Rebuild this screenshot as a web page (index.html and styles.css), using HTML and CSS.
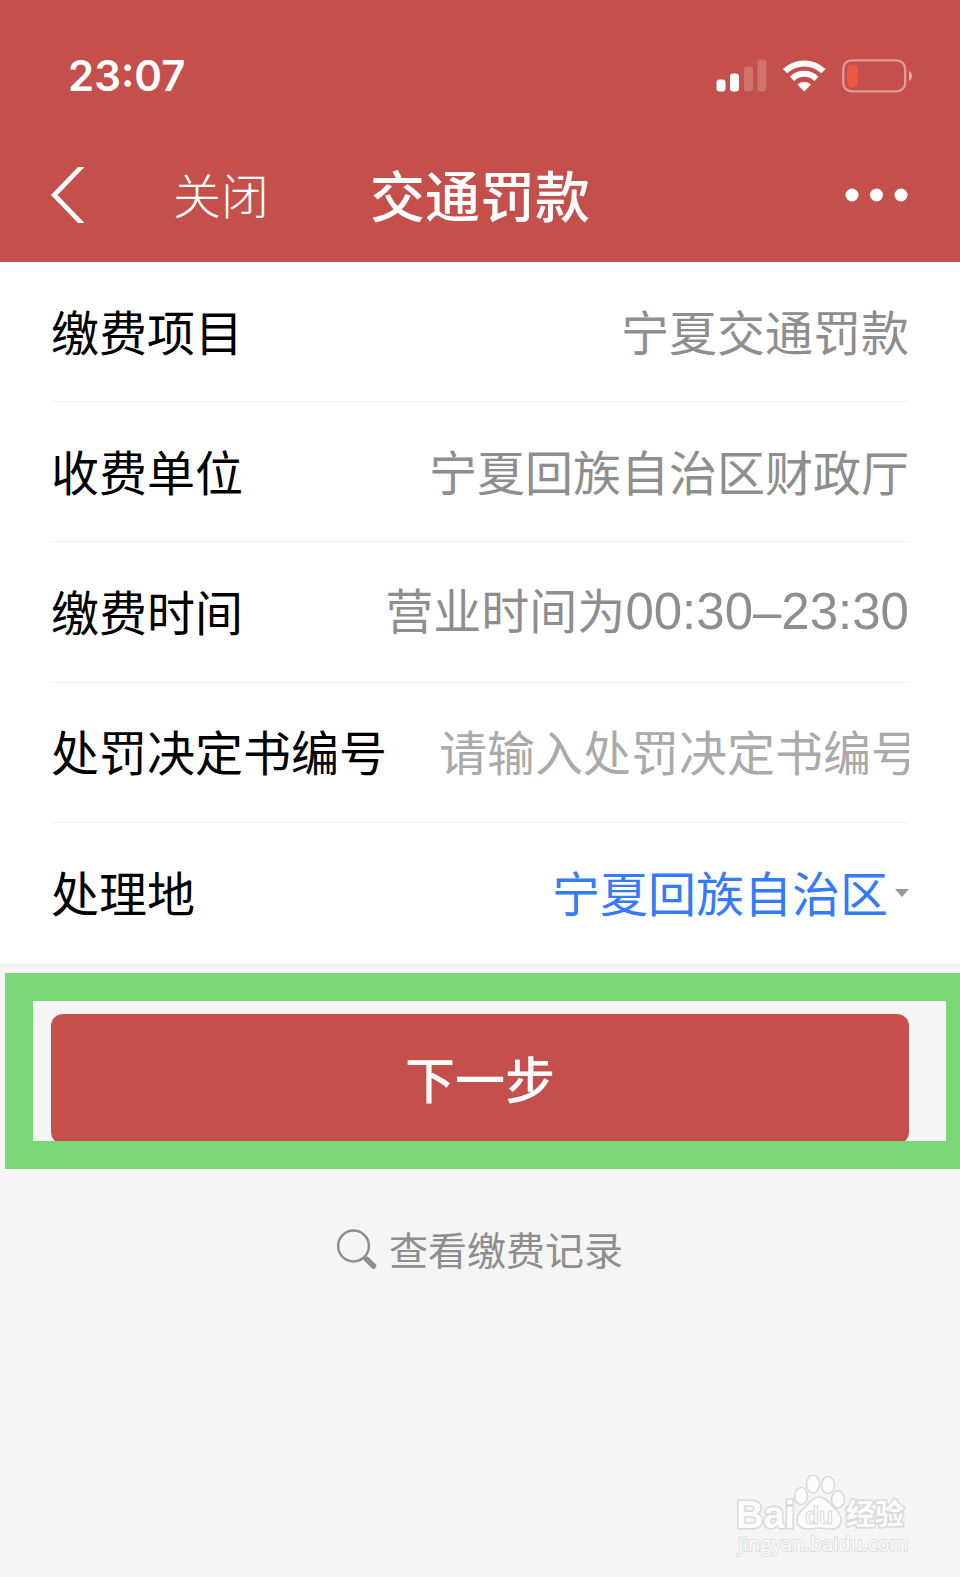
FILE: index.html
```html
<!DOCTYPE html>
<html lang="zh-CN">
<head>
<meta charset="utf-8">
<meta name="viewport" content="width=device-width, initial-scale=1">
<title>交通罚款</title>
<link rel="stylesheet" href="styles.css">
</head>
<body>
<div class="page">
  <header class="header">
    <div class="status">
      <span class="clock">23:07</span>
      <svg class="status-icons" viewBox="0 0 196 34" aria-hidden="true">
        <g fill="#fff">
          <rect x="0.5" y="20.500" width="9" height="12" rx="3"/>
          <rect x="14" y="14.500" width="9" height="18" rx="3"/>
          <rect x="28" y="7.500" width="9" height="25" rx="3" opacity=".2"/>
          <rect x="41.5" y="0.5" width="9" height="32" rx="3" opacity=".2"/>
        </g>
        <g fill="none" stroke="#fff" stroke-width="6">
          <path d="M69 12.200a27.500 27.500 0 0 1 38.400 0"/>
          <path d="M76 19.800a17.500 17.500 0 0 1 24.400 0"/>
        </g>
        <path d="M81.500 25.500a10.600 10.600 0 0 1 13.400 0L88.200 32.500z" fill="#fff"/>
        <rect x="127.2" y="1.4" width="62" height="31" rx="8.5" fill="none" stroke="#fff" stroke-opacity=".42" stroke-width="2.4"/>
        <rect x="131" y="5.400" width="11" height="23" rx="5" fill="#ef5545"/>
        <path d="M193 12c4 2 4 8 0 10z" fill="#fff" opacity=".55"/>
      </svg>
    </div>
    <nav class="nav">
      <div class="nav-left">
        <button class="icon-button" type="button" aria-label="返回">
          <svg class="chevron" viewBox="0 0 34 56" aria-hidden="true"><path d="M27 0h6.5L6.5 28l27 28H27L0 28z" fill="#fff"/></svg>
        </button>
        <button class="close" type="button">关闭</button>
      </div>
      <h1 class="title">交通罚款</h1>
      <button class="icon-button more" type="button" aria-label="更多">
        <svg class="dots" viewBox="0 0 64 14" aria-hidden="true"><g fill="#fff"><circle cx="7" cy="7" r="6.5"/><circle cx="31.500" cy="7" r="6.5"/><circle cx="56" cy="7" r="6.5"/></g></svg>
      </button>
    </nav>
  </header>

  <main>
    <form class="form">
      <div class="list">
        <div class="row"><span class="label">缴费项目</span><span class="value">宁夏交通罚款</span></div>
        <div class="row"><span class="label">收费单位</span><span class="value">宁夏回族自治区财政厅</span></div>
        <div class="row"><span class="label">缴费时间</span><span class="value">营业时间为<span class="hours">00:30–23:30</span></span></div>
        <div class="row"><label class="label" for="number">处罚决定书编号</label><input class="input" id="number" type="text" placeholder="请输入处罚决定书编号"></div>
        <div class="row">
          <label class="label" for="region">处理地</label>
          <span class="picker">
            <select class="select" id="region"><option>宁夏回族自治区</option></select>
            <svg class="caret" viewBox="0 0 14 12" aria-hidden="true"><path d="M0 4h14l-7 8z" fill="#999"/></svg>
          </span>
        </div>
      </div>
      <div class="action">
        <button class="submit" type="button">下一步</button>
        <div class="highlight"></div>
      </div>
    </form>
    <a class="records" href="#">
      <svg class="search" viewBox="0 0 40 40" aria-hidden="true"><circle cx="16.500" cy="17" r="15.400" fill="none" stroke="#8e8e8e" stroke-width="2.500"/><path d="M27.500 28.500l2 2" stroke="#8e8e8e" stroke-width="4"/><path d="M30 30.500l6.500 6.500" stroke="#8e8e8e" stroke-width="5.500" stroke-linecap="round"/></svg>
      <span class="records-text">查看缴费记录</span>
    </a>
  </main>

  <svg class="watermark" viewBox="0 0 176 88" role="img" aria-label="Baidu 经验">
    <g fill="#fcfcfc" stroke="#d9d9d9" stroke-width="1.500">
      <ellipse cx="65" cy="21" rx="6.500" ry="8.500"/>
      <ellipse cx="77" cy="9" rx="6.500" ry="9"/>
      <ellipse cx="92" cy="10" rx="6.500" ry="8.500"/>
      <ellipse cx="102" cy="24.500" rx="6.500" ry="8.500"/>
      <path d="M83 22c7 0 10 6 14 10 5 4 8 8 8 13 0 6-4 9-10 9-5 0-8-1-12-1s-7 1-12 1c-6 0-10-4-10-9 0-6 4-9 8-13 5-4 7-10 14-10z"/>
    </g>
    <g class="mark">
      <text x="0" y="53" font-size="38">Bai</text>
      <text class="mark-du" x="69" y="49" font-size="23">du</text>
      <text class="mark-cjk" x="110" y="50" font-size="29">经验</text>
    </g>
    <text class="mark-url" x="2" y="76" font-size="20">jingyan.baidu.com</text>
  </svg>
</div>
</body>
</html>
```
FILE: styles.css
```css
* {
  box-sizing: border-box;
}

body {
  margin: 0;
  background: #f5f5f5;
  font-family: "Noto Sans CJK SC", sans-serif;
  font-size: 48px;
  line-height: 72px;
  color: #000;
}

button,
input,
select {
  margin: 0;
  padding: 0;
  border: 0;
  background: none;
  font: inherit;
  color: inherit;
}

.page {
  position: relative;
  min-height: 100vh;
  overflow: hidden;
}

.header {
  background: #c5504b;
  color: #fff;
}

.status {
  display: flex;
  justify-content: space-between;
  align-items: center;
  height: 128px;
  padding: 24px 48px 0 68px;
}

.clock {
  font-family: Inter, sans-serif;
  font-size: 42px;
  font-weight: 600;
}

.status-icons {
  width: 196px;
  height: 34px;
}

.nav {
  display: grid;
  grid-template-columns: 1fr auto 1fr;
  align-items: center;
  height: 134px;
  padding: 0 51px;
}

.nav-left {
  display: flex;
  align-items: center;
  gap: 88px;
}

.icon-button {
  display: flex;
}

.more {
  justify-self: end;
}

.chevron {
  width: 34px;
  height: 56px;
}

.dots {
  width: 64px;
  height: 14px;
}

.close,
.title {
  padding-bottom: 4px;
}

.close {
  font-size: 48px;
  font-weight: 300;
}

.title {
  margin: 0;
  font-size: 55px;
  font-weight: 500;
}

.list {
  display: grid;
  grid-auto-rows: 1fr;
  min-height: 701px;
  padding: 0 51px;
  background: #fff;
}

.row {
  display: flex;
  justify-content: space-between;
  align-items: center;
  gap: 52px;
  padding-bottom: 4px;
  border-bottom: 1px solid #f2f2f2;
}

.row:last-child {
  border-bottom: 0;
}

.label {
  flex: none;
}

.value {
  color: #8e8e8e;
  white-space: nowrap;
}

.hours {
  font-family: "Liberation Sans", sans-serif;
  font-size: 51px;
}

.input {
  flex: 1;
  min-width: 0;
  height: 72px;
}

.input::placeholder {
  color: #aaa;
  opacity: 1;
}

.picker {
  display: flex;
  align-items: center;
  gap: 6px;
}

.select {
  appearance: none;
  height: 72px;
  color: #347bf7;
}

.caret {
  width: 14px;
  height: 12px;
}

.action {
  position: relative;
  margin: 51px 51px 0;
}

.submit {
  display: block;
  width: 100%;
  height: 130px;
  padding-bottom: 4px;
  border-radius: 12px;
  background: #c5504b;
  color: #fff;
  font-size: 50px;
  font-weight: 500;
}

.highlight {
  position: absolute;
  top: -41px;
  right: -65px;
  bottom: -25px;
  left: -46px;
  border: 28px solid #7bd678;
  pointer-events: none;
}

.records {
  display: flex;
  justify-content: center;
  align-items: center;
  gap: 12px;
  margin: 74px 51px 0;
  color: #8e8e8e;
  font-size: 39px;
  line-height: 60px;
  text-decoration: none;
}

.search {
  width: 40px;
  height: 40px;
}

.records-text {
  padding-bottom: 2px;
}

.watermark {
  position: absolute;
  right: 48px;
  bottom: 14px;
  width: 176px;
  height: 88px;
}

.mark {
  fill: #fcfcfc;
  stroke: #d9d9d9;
  stroke-width: 3px;
  paint-order: stroke;
  font-family: "Liberation Sans", sans-serif;
  font-weight: 700;
}

.mark-du {
  stroke-width: 1px;
  paint-order: normal;
}

.mark-cjk {
  font-family: "Noto Sans CJK SC", sans-serif;
}

.mark-url {
  fill: #fcfcfc;
  stroke: #dfdfdf;
  stroke-width: 2px;
  paint-order: stroke;
  font-family: "Open Sans", sans-serif;
}
```
